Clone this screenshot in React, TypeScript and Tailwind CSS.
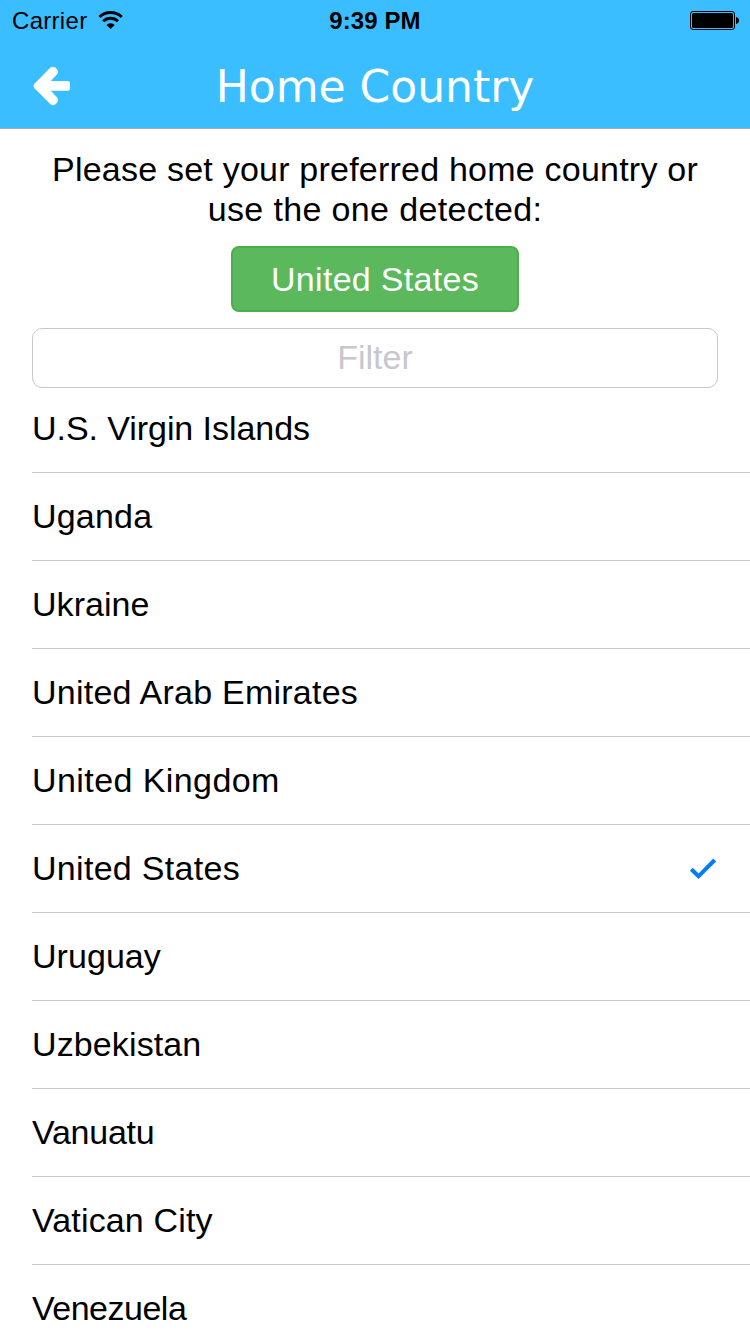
const countries = [
  { name: 'U.S. Virgin Islands', tracking: 'tracking-[-0.06px]' },
  { name: 'Uganda', tracking: 'tracking-[0.2px]' },
  { name: 'Ukraine', tracking: 'tracking-[0.05px]' },
  { name: 'United Arab Emirates', tracking: 'tracking-[0.24px]' },
  { name: 'United Kingdom', tracking: 'tracking-[0.42px]' },
  { name: 'United States', tracking: 'tracking-[0.3px]' },
  { name: 'Uruguay', tracking: 'tracking-[0.05px]' },
  { name: 'Uzbekistan', tracking: 'tracking-[0.12px]' },
  { name: 'Vanuatu', tracking: 'tracking-[-0.25px]' },
  { name: 'Vatican City', tracking: 'tracking-[0.15px]' },
  { name: 'Venezuela', tracking: 'tracking-[-0.5px]' },
];

function WifiIcon() {
  return (
    <svg width="26" height="20" viewBox="98 10 26 20" fill="none" stroke="#000" strokeWidth="2.9">
      <path d="M99.4 17a16 16 0 0 1 22.4 0" />
      <path d="M103.2 21.200a10.600 10.600 0 0 1 14.800 0" />
      <path d="M106.400 24.900a6.200 6.200 0 0 1 8.400 0l-4.200 4.200z" fill="#000" stroke="none" />
    </svg>
  );
}

function BatteryIcon() {
  return (
    <svg width="50" height="20" viewBox="690 11 50 20">
      <rect x="690.5" y="11.5" width="44" height="18" rx="2.5" fill="none" stroke="#000" />
      <rect x="692" y="13" width="41" height="15" rx="1.5" fill="#000" />
      <path d="M736 17c2.2.4 3 1.6 3 3.5s-.8 3.100-3 3.500z" fill="#000" />
    </svg>
  );
}

function BackIcon() {
  return (
    <svg width="40" height="42" viewBox="32 65 40 42" fill="#fff">
      <path d="M34.200 84 L50.200 67.800 Q52.800 65.600 55.400 67.600 L57.200 69.400 Q59 71.800 57.400 74.100 L50.800 81 H67.500 Q70 81 70 83.800 V88 Q70 90.700 67.500 90.700 H50.800 L57.400 97.800 Q59 100.100 57.200 102.500 L55.400 104.300 Q52.800 106.200 50.200 104 L34.200 87.900 Q32.600 86 34.200 84 Z" />
    </svg>
  );
}

function CheckIcon() {
  return (
    <svg width="28" height="24" viewBox="689 857 28 24" fill="none" stroke="#007aff" strokeWidth="4">
      <path d="M691.300 869.300l7.200 7L714.700 860" />
    </svg>
  );
}

export default function App() {
  return (
    <div className="flex h-[1334px] w-[750px] flex-col overflow-hidden bg-white font-['Liberation_Sans',sans-serif] text-[34px] text-black">
      <header className="flex h-[129px] shrink-0 flex-col border-b border-[#a8abad] bg-[#3abeff]">
        <div className="grid h-10 grid-cols-3 pt-[7px] text-2xl leading-7">
          <div className="flex pl-3">
            <span className="w-[86px] whitespace-nowrap tracking-[0.3px]">Carrier</span>
            <span className="pt-[3px]"><WifiIcon /></span>
          </div>
          <div className="text-center font-bold tracking-[0.1px]">9:39 PM</div>
          <div className="flex justify-end pt-1 pr-[10px]"><BatteryIcon /></div>
        </div>
        <div className="grid h-[88px] grid-cols-[72px_1fr_72px]">
          <button className="flex items-start pt-[25px] pl-8" aria-label="Back"><BackIcon /></button>
          <h1 className="pt-[21px] text-center font-['DejaVu_Sans',sans-serif] text-[44px] leading-[52px] font-normal tracking-[0px] text-white">Home Country</h1>
        </div>
      </header>

      <main className="flex min-h-0 flex-1 flex-col">
        <p className="pt-5 text-center leading-10">
          <span className="block tracking-[0.22px]">Please set your preferred home country or</span>
          <span className="block tracking-[0.36px]">use the one detected:</span>
        </p>
        <button className="mt-[17px] h-[66px] w-72 shrink-0 self-center rounded-lg border-2 border-[#4cae4c] bg-[#5cb85c] text-white tracking-[0.3px]">
          United States
        </button>
        <input
          className="mx-8 mt-4 h-[60px] shrink-0 rounded-[10px] border border-[#c8c7cc] pb-0.5 text-center placeholder:text-[#c7c7cd] placeholder:opacity-100"
          placeholder="Filter"
        />
        <ul className="-mt-[3px] pl-8">
          {countries.map(({ name, tracking }) => (
            <li key={name} className="flex h-[88px] items-center justify-between border-b border-[#c8c7cc] pr-[33px]">
              <span className={tracking}>{name}</span>
              {name === 'United States' && <CheckIcon />}
            </li>
          ))}
        </ul>
      </main>
    </div>
  );
}
